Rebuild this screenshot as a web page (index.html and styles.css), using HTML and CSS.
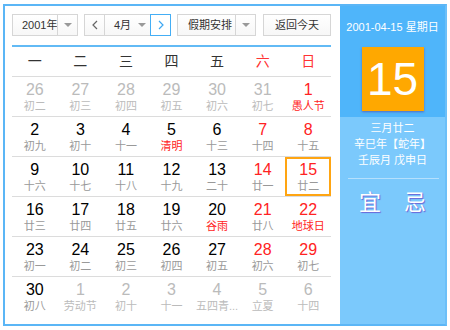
FILE: index.html
```html
<!DOCTYPE html>
<html lang="zh-CN">
<head>
    <meta charset="UTF-8">
    <meta name="viewport" content="width=device-width, initial-scale=1.0">
    <title>万年历</title>
    <link rel="stylesheet" href="styles.css">
</head>
<body>
    <div class="calendar">
        <div class="main">
            <div class="toolbar">
                <div class="select year">
                    <span class="label">2001年</span>
                    <span class="drop"><i class="caret"></i></span>
                </div>
                <div class="select month">
                    <span class="nav">
                        <svg width="6" height="10" viewBox="0 0 6 10"><polyline points="5,1 1,5 5,9" fill="none" stroke="#666" stroke-width="1.2"/></svg>
                    </span>
                    <span class="label">4月</span>
                    <span class="drop"><i class="caret"></i></span>
                    <span class="nav next">
                        <svg width="6" height="10" viewBox="0 0 6 10"><polyline points="1,1 5,5 1,9" fill="none" stroke="#3ea7f2" stroke-width="1.2"/></svg>
                    </span>
                </div>
                <div class="select holiday">
                    <span class="label">假期安排</span>
                    <span class="drop"><i class="caret"></i></span>
                </div>
                <div class="btn-today">返回今天</div>
            </div>

            <div class="weekdays">
                <span>一</span><span>二</span><span>三</span><span>四</span><span>五</span>
                <span class="red">六</span><span class="red">日</span>
            </div>

            <div class="days">
                <div class="day other"><b>26</b><em>初二</em></div>
                <div class="day other"><b>27</b><em>初三</em></div>
                <div class="day other"><b>28</b><em>初四</em></div>
                <div class="day other"><b>29</b><em>初五</em></div>
                <div class="day other"><b>30</b><em>初六</em></div>
                <div class="day other"><b>31</b><em>初七</em></div>
                <div class="day weekend fest"><b>1</b><em>愚人节</em></div>

                <div class="day"><b>2</b><em>初九</em></div>
                <div class="day"><b>3</b><em>初十</em></div>
                <div class="day"><b>4</b><em>十一</em></div>
                <div class="day fest"><b>5</b><em>清明</em></div>
                <div class="day"><b>6</b><em>十三</em></div>
                <div class="day weekend"><b>7</b><em>十四</em></div>
                <div class="day weekend"><b>8</b><em>十五</em></div>

                <div class="day"><b>9</b><em>十六</em></div>
                <div class="day"><b>10</b><em>十七</em></div>
                <div class="day"><b>11</b><em>十八</em></div>
                <div class="day"><b>12</b><em>十九</em></div>
                <div class="day"><b>13</b><em>二十</em></div>
                <div class="day weekend"><b>14</b><em>廿一</em></div>
                <div class="day weekend today"><b>15</b><em>廿二</em></div>

                <div class="day"><b>16</b><em>廿三</em></div>
                <div class="day"><b>17</b><em>廿四</em></div>
                <div class="day"><b>18</b><em>廿五</em></div>
                <div class="day"><b>19</b><em>廿六</em></div>
                <div class="day fest"><b>20</b><em>谷雨</em></div>
                <div class="day weekend"><b>21</b><em>廿八</em></div>
                <div class="day weekend fest"><b>22</b><em>地球日</em></div>

                <div class="day"><b>23</b><em>初一</em></div>
                <div class="day"><b>24</b><em>初二</em></div>
                <div class="day"><b>25</b><em>初三</em></div>
                <div class="day"><b>26</b><em>初四</em></div>
                <div class="day"><b>27</b><em>初五</em></div>
                <div class="day weekend"><b>28</b><em>初六</em></div>
                <div class="day weekend"><b>29</b><em>初七</em></div>

                <div class="day last"><b>30</b><em>初八</em></div>
                <div class="day other last"><b>1</b><em>劳动节</em></div>
                <div class="day other last"><b>2</b><em>初十</em></div>
                <div class="day other last"><b>3</b><em>十一</em></div>
                <div class="day other last"><b>4</b><em>五四青...</em></div>
                <div class="day other last"><b>5</b><em>立夏</em></div>
                <div class="day other last"><b>6</b><em>十四</em></div>
            </div>
        </div>

        <div class="side">
            <div class="side-top">
                <p class="full-date">2001-04-15 星期日</p>
                <div class="big-day">15</div>
            </div>
            <div class="side-bottom">
                <p class="lunar">三月廿二<br>辛巳年【蛇年】<br>壬辰月 戊申日</p>
                <div class="divider"></div>
                <div class="yiji">
                    <span>宜</span>
                    <span>忌</span>
                </div>
            </div>
        </div>
    </div>
</body>
</html>
```

FILE: styles.css
```css
body{
    margin: 0;
    font-family: "Liberation Sans", Arial, "Noto Sans CJK SC", sans-serif;
    background: #fff;
}
.calendar{
    display: flex;
    width: 444px;
    height: 322px;
    margin: 4px 0 0 3px;
    border: 2px solid #5bb6f6;
    border-right-color: #6cbff8;
    box-sizing: border-box;
}
.main{
    width: 335px;
    padding: 8px 9px 0 7px;
    box-sizing: border-box;
}

/* barre d'outils */
.toolbar{
    display: flex;
    height: 22px;
    padding-bottom: 9px;
    border-bottom: 2px solid #62baf5;
    font-size: 11px;
    color: #333;
}
.select{
    display: flex;
    height: 22px;
    border: 1px solid #d6d6d6;
    box-sizing: border-box;
    background: linear-gradient(#fff, #f7f7f7);
    margin-right: 6px;
}
.select .label{
    flex: 1;
    line-height: 20px;
    padding-left: 9px;
    white-space: nowrap;
    overflow: hidden;
}
.select .drop{
    width: 19px;
    border-left: 1px solid #d6d6d6;
    display: flex;
    align-items: center;
    justify-content: center;
}
.caret{
    width: 0;
    height: 0;
    border-left: 4px solid transparent;
    border-right: 4px solid transparent;
    border-top: 4px solid #999;
}
.year{
    width: 66px;
}
.month{
    width: 87px;
}
.month .label{
    padding-left: 9px;
}
.month .drop{
    border-left: 0;
    width: 16px;
}
.nav{
    width: 19px;
    display: flex;
    align-items: center;
    justify-content: center;
    border-right: 1px solid #d6d6d6;
}
.nav.next{
    border: 1px solid #44aef5;
    margin: -1px -1px -1px 0;
    background: #fff;
}
.holiday{
    width: 79px;
    margin-right: 7px;
}
.holiday .label{
    padding-left: 10px;
}
.btn-today{
    width: 68px;
    height: 22px;
    line-height: 20px;
    border: 1px solid #d6d6d6;
    box-sizing: border-box;
    text-align: center;
    background: linear-gradient(#fff, #f7f7f7);
}

/* jours de la semaine */
.weekdays{
    display: grid;
    grid-template-columns: repeat(7, 1fr);
    height: 29px;
    line-height: 29px;
    border-bottom: 1px solid #dcdcdc;
    font-size: 14px;
    color: #333;
    text-align: center;
}
.red{
    color: #f33;
}

/* grille */
.days{
    display: grid;
    grid-template-columns: repeat(7, 1fr);
}
.day{
    height: 40px;
    box-sizing: border-box;
    border-bottom: 1px solid #dcdcdc;
    padding-top: 3px;
    text-align: center;
}
.day.last{
    border-bottom: 0;
}
.day b{
    display: block;
    font-weight: normal;
    font-size: 16px;
    line-height: 19px;
    color: #000;
}
.day em{
    display: block;
    font-style: normal;
    font-size: 11px;
    line-height: 15px;
    color: #999;
    white-space: nowrap;
}
.day.weekend b{
    color: #f22;
}
.day.fest em{
    color: #f22;
}
.day.other b,
.day.other em{
    color: #bbb;
}
.day.today{
    box-shadow: inset 0 0 0 2px #ffa512;
}

/* panneau de droite */
.side{
    flex: 1;
    background: #7bc9fc;
    color: #fff;
    text-align: center;
}
.side-top{
    height: 111px;
    background: #4fb5fa;
    overflow: hidden;
}
.full-date{
    margin: 14px 0 0;
    font-size: 11px;
    line-height: 14px;
}
.big-day{
    width: 62px;
    height: 64px;
    margin: 13px auto 0;
    background: #ffa800;
    font-size: 46px;
    line-height: 64px;
    box-shadow: 0 1px 2px rgba(90, 60, 150, .6);
}
.lunar{
    margin: 3px 0 0;
    font-size: 11px;
    line-height: 16px;
}
.divider{
    height: 1px;
    margin: 10px 6px 0 8px;
    background: #b5e0fd;
}
.yiji{
    display: flex;
    justify-content: center;
    gap: 23px;
    margin-top: 9px;
    font-size: 22px;
    line-height: 30px;
    text-shadow: 1px 1px 1px #6a63d6;
}
```
